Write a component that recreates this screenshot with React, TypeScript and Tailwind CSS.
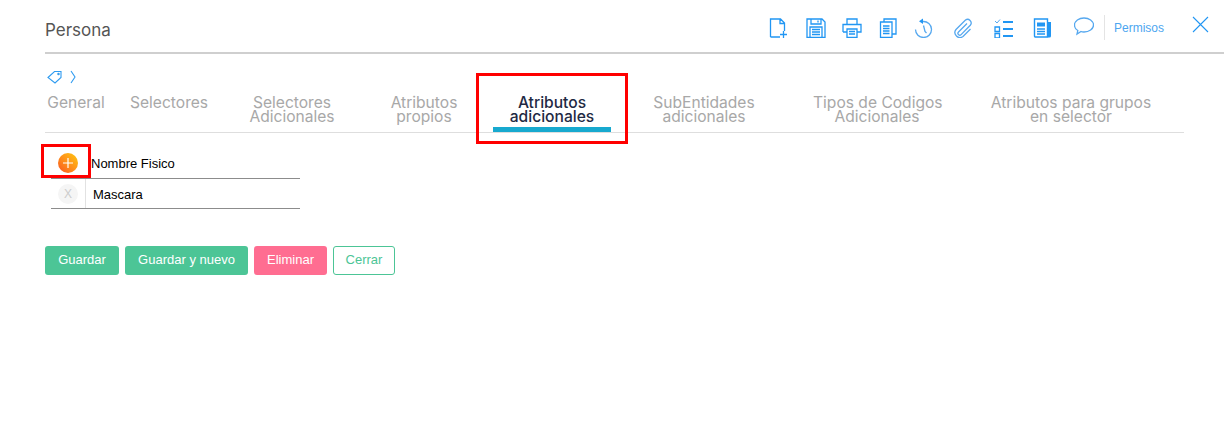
import React from 'react';

const stroke = '#2196f3';

function IconBox({ className, children }: { className: string; children: React.ReactNode }) {
  return (
    <svg viewBox="0 0 20 20" className={`h-5 w-5 shrink-0 ${className}`} fill="none" stroke={stroke} strokeWidth="1.3">
      {children}
    </svg>
  );
}

const tabs = [
  { label: ['General'], cls: 'w-[62px]' },
  { label: ['Selectores'], cls: 'w-[78px] ml-[23px]' },
  { label: ['Selectores', 'Adicionales'], cls: 'w-[94px] ml-[37px]' },
  { label: ['Atributos', 'propios'], cls: 'w-[78px] ml-[46px]' },
  { label: ['Atributos', 'adicionales'], cls: 'w-[118px] ml-[30px]', active: true },
  { label: ['SubEntidades', 'adicionales'], cls: 'w-[118px] ml-[34px]' },
  { label: ['Tipos de Codigos', 'Adicionales'], cls: 'w-[128px] ml-[50px]' },
  { label: ['Atributos para grupos', 'en selector'], cls: 'w-[164px] ml-[48px]' },
];

export default function App() {
  return (
    <div className="relative h-[438px] w-[1227px] overflow-hidden bg-white font-['Liberation_Sans',sans-serif]">
      {/* Header */}
      <div className="ml-[45px] mr-[3px] flex h-[54px] items-center border-b-2 border-[#cfcfcf] pt-[4px]">
        <h1 className="mt-[6px] w-[724px] font-['Inter',sans-serif] text-[17px] text-[#555]">Persona</h1>

        <IconBox className="mb-[1px]">
          <path d="M1.500 19V1h10l4 4v8M11 1v4.500h4.500M1.500 19H11M11 16.500h7M14.500 13v7" />
        </IconBox>
        <IconBox className="ml-[17px] mb-[1px]">
          <path d="M1 1h15l3 3v15.500H1zM5 1v5h10V1M12 2.500v2M4 19.500V9h12v10.500M6 11.500h8M6 14h8M6 16.500h8" />
        </IconBox>
        <IconBox className="ml-[16px] mb-[1px]">
          <path d="M5 6V1h10v5M1 14V6.500h18V14h-4M5 14H1M5 11h10v8.500H5zM7 13.500h6M7 16h6" />
        </IconBox>
        <IconBox className="ml-[16px] mb-[1px]">
          <path d="M6 4V1h12v15h-4M2.500 4H14v15.500H2.500zM5 8h6.500M5 10.500h6.500M5 13h6.500M5 15.500h6.500" />
        </IconBox>
        <IconBox className="ml-[16px] mb-[1px]">
          <path d="M9 3.500a8 8 0 1 1-7.500 8" stroke="#56a8ef" />
          <path d="M9 0.500v5.500L5 3.200z" fill={stroke} stroke="none" />
          <path d="M9.500 7.500l1.500 6 1.500 1.500" stroke="#56a8ef" />
        </IconBox>
        <IconBox className="ml-[19px] mb-[1px]">
          <path d="M14 5.500L5.500 14a1.800 1.800 0 0 0 2.600 2.600L17.500 7a3.600 3.600 0 0 0-5-5L3 11.500a5 5 0 0 0 7 7l7.500-7.500" stroke="#56a8ef" />
        </IconBox>
        <IconBox className="ml-[21px] mb-[1px]">
          <path d="M1 3l2 2 3-3.500" strokeWidth="1" stroke="#56a8ef" />
          <path d="M1 9h4.500v4.500H1zM1 15.500h4.500V20H1z" />
          <path d="M9 4h10M9 11h10M9 18h10" strokeWidth="2" />
        </IconBox>
        <IconBox className="ml-[19px] mb-[1px]">
          <path d="M1.500 1h13v18h-12a1 1 0 0 1-1-1z" strokeWidth="1.400" />
          <path d="M4 4.500h8v4H4z" fill={stroke} stroke="none" />
          <path d="M4 11h8M4 13.500h8M4 16h8" />
          <path d="M15 4h3v14a1.500 1.500 0 0 1-1.500 1.500H15z" fill={stroke} stroke="none" />
        </IconBox>
        <IconBox className="ml-[21px] mb-[3px]">
          <path d="M10 1c5 0 9.500 3 9.500 7s-4.500 7-9.500 7c-1 0-2 0-3-.5L3 17l.8-3.500C1.500 12.300.5 10.300.5 8 .5 4 5 1 10 1z" stroke="#56a8ef" />
        </IconBox>

        <div className="ml-[10px] mb-[2px] h-[25px] w-px bg-[#e4e4e4]" />
        <span className="ml-[9px] text-[12px] text-[#4da6f0]">Permisos</span>
        <svg viewBox="0 0 17 17" className="mb-[7px] ml-[28px] h-[17px] w-[17px]" fill="none" stroke="#2196f3" strokeWidth="1.100">
          <path d="M1 1l15 15M16 1L1 16" />
        </svg>
      </div>

      <div className="ml-[45px] w-[1139px]">
        {/* Breadcrumb */}
        <div className="mt-[15px] flex h-[16px] items-center">
          <svg viewBox="0 0 16 14" className="ml-[2px] h-[14px] w-[16px]" fill="none" stroke="#2f9bf0" strokeWidth="1.100">
            <path d="M1 7.500L7.500 1.500h6.500v6L8 13z" />
            <circle cx="11.500" cy="4" r="0.700" />
          </svg>
          <svg viewBox="0 0 6 14" className="ml-[7px] h-[14px] w-[6px]" fill="none" stroke="#2f9bf0" strokeWidth="1.100">
            <path d="M1 1l4 6-4 6" />
          </svg>
        </div>

        {/* Tabs */}
        <div className="flex h-[48px] items-start border-b border-[#dedede] pt-[10px] font-['Inter',sans-serif] text-[15.600px] leading-[14px]">
          {tabs.map((tab) => (
            <div key={tab.label.join(' ')} className={`relative h-[36px] shrink-0 whitespace-nowrap pt-[1px] text-center ${tab.cls} ${tab.active ? 'font-medium text-[#1f2a44]' : 'text-[#a8a8a8]'}`}>
              {tab.label.map((line) => (
                <div key={line}>{line}</div>
              ))}
              {tab.active && <div className="absolute bottom-[-1px] left-0 h-[5px] w-full bg-[#17a9cf]" />}
            </div>
          ))}
        </div>

        {/* Fields */}
        <div className="ml-[6px] mt-[15px] w-[249px] text-[13px] text-black">
          <div className="flex h-[31px] items-center border-b border-[#8c8c8c]">
            <div className="ml-[7px] flex h-5 w-5 items-center justify-center rounded-full bg-linear-to-bl from-[#fdc80c] to-[#f8501f]">
              <svg viewBox="0 0 12 12" className="h-3 w-3" fill="none" stroke="#fff" strokeWidth="1.200">
                <path d="M6 1v10M1 6h10" />
              </svg>
            </div>
            <span className="ml-[13px] pt-[2px]">Nombre Fisico</span>
          </div>
          <div className="flex h-[30px] items-center border-b border-[#8c8c8c]">
            <div className="flex h-full w-[35px] items-center border-r border-[#e2e2e2]">
              <div className="ml-[7px] flex h-5 w-5 items-center justify-center rounded-full bg-[#f5f5f5] text-[12px] text-[#cccccc]">X</div>
            </div>
            <span className="ml-[7px] pt-[2px]">Mascara</span>
          </div>
        </div>

        {/* Actions */}
        <div className="mt-[37px] flex gap-[6px] text-[13px]">
          <button className="h-[29px] w-[74px] rounded-[3px] bg-[#4cc596] pb-[2px] text-white">Guardar</button>
          <button className="h-[29px] w-[123px] rounded-[3px] bg-[#4cc596] pb-[2px] text-white">Guardar y nuevo</button>
          <button className="h-[29px] w-[73px] rounded-[3px] bg-[#ff6d91] pb-[2px] text-white">Eliminar</button>
          <button className="h-[29px] w-[62px] rounded-[3px] border border-[#4cc596] bg-white pb-[2px] text-[#4cc596]">Cerrar</button>
        </div>
      </div>

      {/* Red annotation boxes */}
      <div className="absolute left-[476px] top-[73px] h-[71px] w-[152px] border-[3px] border-[#ff0000]" />
      <div className="absolute left-[41px] top-[144px] h-[34px] w-[50px] border-[3px] border-[#ff0000]" />
    </div>
  );
}
